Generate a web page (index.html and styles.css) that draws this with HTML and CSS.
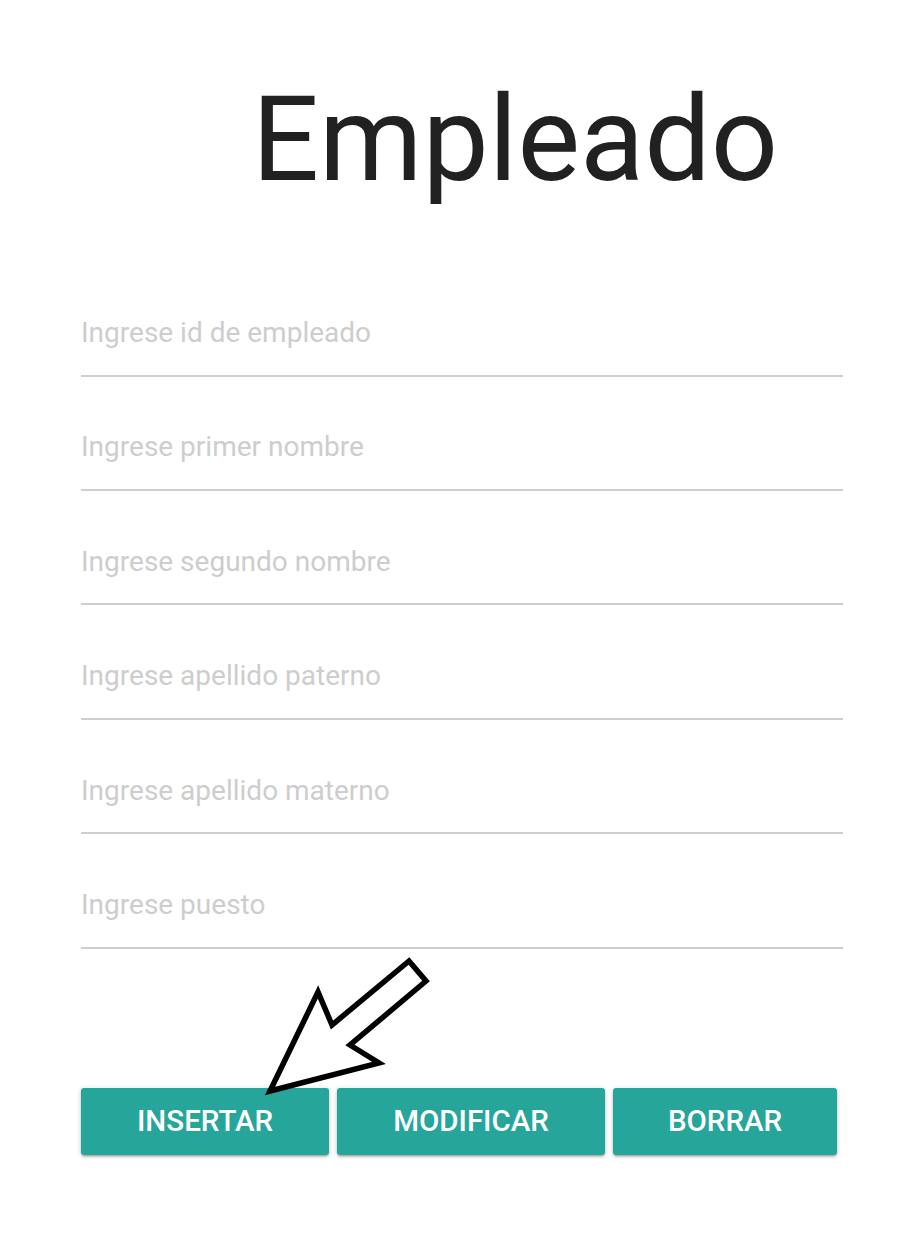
FILE: index.html
```html
<!DOCTYPE html>
<html lang="es">
<head>
<meta charset="utf-8">
<title>Empleado</title>
<link rel="stylesheet" href="styles.css">
</head>
<body>
<main class="page">
  <h1 class="title">Empleado</h1>
  <form class="form">
    <div class="fields">
      <input class="field" type="text" placeholder="Ingrese id de empleado">
      <input class="field" type="text" placeholder="Ingrese primer nombre">
      <input class="field" type="text" placeholder="Ingrese segundo nombre">
      <input class="field" type="text" placeholder="Ingrese apellido paterno">
      <input class="field" type="text" placeholder="Ingrese apellido materno">
      <input class="field" type="text" placeholder="Ingrese puesto">
    </div>
    <div class="actions">
      <button class="btn" type="button">INSERTAR</button>
      <button class="btn" type="button">MODIFICAR</button>
      <button class="btn btn-last" type="button">BORRAR</button>
    </div>
  </form>
  <svg class="arrow" width="919" height="1253" viewBox="0 0 919 1253" aria-hidden="true">
    <polygon points="270,1091 318,992 332,1025 409,961 426,981 350,1045 379,1063" fill="#ffffff" stroke="#000000" stroke-width="5.5" stroke-linejoin="miter"/>
  </svg>
</main>
</body>
</html>
```
FILE: styles.css
```css
html, body {
  margin: 0;
  padding: 0;
  background: #ffffff;
}

.page {
  position: relative;
  width: 919px;
  height: 1253px;
  font-family: Roboto, "Liberation Sans", sans-serif;
  overflow: hidden;
}

.title {
  margin: 0;
  padding-top: 70px;
  padding-left: 252px;
  font-size: 118px;
  line-height: 1.2;
  font-weight: 400;
  color: #212121;
}

.form {
  margin: 79px 0 0 81px;
  width: 762px;
}

.fields {
  display: flex;
  flex-direction: column;
  gap: 28.4px;
}

.field {
  display: block;
  box-sizing: content-box;
  width: 100%;
  height: 84px;
  padding: 0;
  margin: 0;
  border: none;
  border-bottom: 2px solid #cfcfcf;
  outline: none;
  background: transparent;
  font-family: Roboto, "Liberation Sans", sans-serif;
  font-size: 28px;
  color: #212121;
}

.field::placeholder {
  color: #cdcdcd;
  opacity: 1;
}

.actions {
  display: flex;
  gap: 8px;
  margin-top: 139px;
}

.btn {
  height: 67px;
  padding: 0 56px;
  border: none;
  border-radius: 3px;
  background: #26a69a;
  color: #ffffff;
  font-family: Roboto, "Liberation Sans", sans-serif;
  font-size: 29.5px;
  font-weight: 500;
  box-shadow: 0 2px 2px rgba(0, 0, 0, 0.14), 0 3px 1px -2px rgba(0, 0, 0, 0.12), 0 1px 5px rgba(0, 0, 0, 0.2);
}

.btn-last {
  padding: 0 55px;
}

.arrow {
  position: absolute;
  left: 0;
  top: 0;
  pointer-events: none;
}
```
